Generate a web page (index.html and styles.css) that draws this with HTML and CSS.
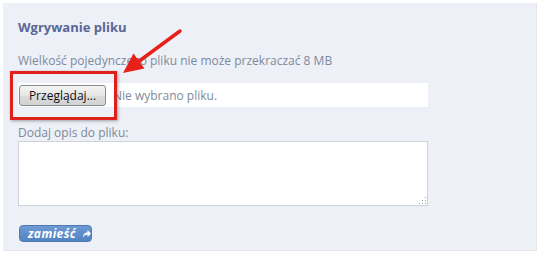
FILE: index.html
```html
<!DOCTYPE html>
<html lang="pl">
<head>
<meta charset="utf-8">
<link rel="stylesheet" href="styles.css">
</head>
<body>
<div class="panel">
  <h2 class="title">Wgrywanie pliku</h2>
  <p class="info">Wielkość pojedynczego pliku nie może przekraczać 8 MB</p>
  <div class="file-row">
    <span class="browse">Przeglądaj...</span>
    <span class="nofile">Nie wybrano pliku.</span>
  </div>
  <label class="label">Dodaj opis do pliku:</label>
  <div class="textarea"><span class="grip"></span></div>
  <div class="actions">
    <span class="submit">zamieść
      <svg class="submit-icon" width="9" height="9" viewBox="0 0 9 9"><path d="M1 8.5 C1 5 3 3.5 5.5 3.5 V1 L9 4.5 L5.5 8 V5.5 C3.5 5.5 2 6.5 1 8.5 Z" fill="#fff"/></svg>
    </span>
  </div>
  <div class="highlight"></div>
  <svg class="arrow" width="90" height="60" viewBox="0 0 90 60">
    <line x1="80" y1="11" x2="38" y2="42" stroke="#e8201a" stroke-width="3.5" stroke-linecap="round"/>
    <polygon points="23,53 44.5,48.5 33.5,33.5" fill="#e8201a"/>
  </svg>
</div>
</body>
</html>
```
FILE: styles.css
```css
html, body { margin: 0; padding: 0; background: #fff; }
body { font-family: "Open Sans", "DejaVu Sans", sans-serif; }
.panel {
  position: relative;
  box-sizing: border-box;
  margin: 3px 0 0 3px;
  width: 534px;
  height: 248px;
  background: #edf0f7;
  border-bottom: 1px solid #e4e6ea;
  border-right: 1px solid #e4e6ea;
  padding: 17px 0 0 15px;
}
.title {
  margin: 0;
  font-size: 13px;
  font-weight: 700;
  line-height: 14px;
  color: #5a6796;
}
.info {
  margin: 19px 0 0 0;
  font-size: 12px;
  line-height: 16px;
  color: #7e8a9a;
}
.file-row {
  margin-top: 14px;
  width: 410px;
  height: 24px;
  background: #fff;
  display: flex;
  align-items: center;
}
.browse {
  box-sizing: border-box;
  margin-left: 1px;
  width: 87px;
  height: 21px;
  border: 1px solid #8a8a8a;
  border-radius: 3px;
  background: linear-gradient(#f4f4f4, #e6e6e6 50%, #dcdcdc 51%, #d2d2d2);
  font-family: "Open Sans", sans-serif;
  font-size: 12px;
  line-height: 19px;
  color: #111;
  text-align: center;
}
.nofile {
  margin-left: 7px;
  font-size: 12px;
  color: #7e8a9a;
}
.label {
  display: block;
  margin-top: 18px;
  font-size: 12px;
  line-height: 16px;
  color: #7e8a9a;
}
.textarea {
  position: relative;
  box-sizing: border-box;
  width: 410px;
  height: 65px;
  background: #fff;
  border: 1px solid #cdd2da;
}
.grip {
  position: absolute;
  right: 1px;
  bottom: 1px;
  width: 8px;
  height: 8px;
  background: radial-gradient(circle, #9aa0a8 0.8px, transparent 1px) 0 0 / 3px 3px;
  clip-path: polygon(100% 0, 100% 100%, 0 100%);
}
.actions { margin-top: 19px; display: flex; }
.submit {
  box-sizing: border-box;
  margin-left: 1px;
  height: 17px;
  width: 73px;
  padding-left: 8px;
  border: 1px solid #4f78b0;
  border-radius: 4px;
  background: linear-gradient(#6e9ad3, #5282c2);
  color: #fff;
  font-size: 12px;
  font-weight: 700;
  font-style: italic;
  line-height: 14px;
  letter-spacing: 0.4px;
  display: flex;
  align-items: center;
  gap: 6px;
}
.highlight {
  position: absolute;
  left: 7px;
  top: 68px;
  width: 101px;
  height: 43px;
  border: 3px solid #e0201a;
  box-shadow: 1px 1px 3px rgba(0,0,0,0.35);
}
.arrow {
  position: absolute;
  left: 97px;
  top: 17px;
}
```
